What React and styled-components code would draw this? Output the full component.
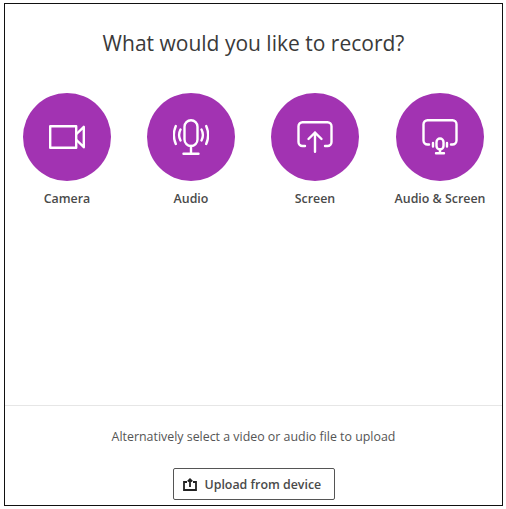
import React from 'react';
import styled, { createGlobalStyle } from 'styled-components';

const GlobalStyle = createGlobalStyle`
  html, body {
    margin: 0;
    padding: 0;
    background: #fff;
    font-family: "Open Sans", "Noto Sans", sans-serif;
  }
`;

const Frame = styled.div`
  box-sizing: border-box;
  width: 499px;
  height: 503px;
  margin: 3px 0 0 4px;
  border: 1px solid #111;
  display: flex;
  flex-direction: column;
  align-items: center;
`;

const Title = styled.h1`
  margin: 25px 0 0;
  font-size: 21px;
  line-height: 28px;
  font-weight: 400;
  color: #3a3a3a;
`;

const Options = styled.div`
  display: grid;
  grid-template-columns: repeat(3, 124px) 126px;
  align-self: stretch;
  margin-top: 36px;
  flex: 1;
  align-content: start;
`;

const Option = styled.button`
  border: 0;
  padding: 0;
  background: none;
  display: flex;
  flex-direction: column;
  align-items: center;
  gap: 8px;
  font-family: inherit;
  cursor: pointer;
`;

const Circle = styled.span`
  width: 88px;
  height: 88px;
  border-radius: 50%;
  background: #a233b2;
  display: flex;
  align-items: center;
  justify-content: center;
`;

const Label = styled.span`
  font-size: 12.4px;
  line-height: 20px;
  font-weight: 600;
  color: #4a4a4a;
  white-space: nowrap;
`;

const Footer = styled.div`
  align-self: stretch;
  border-top: 1px solid #e6e6e6;
  height: 100px;
  box-sizing: border-box;
  display: flex;
  flex-direction: column;
  align-items: center;
`;

const Hint = styled.p`
  margin: 21px 0 0;
  font-size: 12.4px;
  line-height: 20px;
  color: #555;
`;

const UploadButton = styled.button`
  box-sizing: border-box;
  width: 162px;
  height: 32px;
  margin-top: 21px;
  padding: 0 0 0 9px;
  border: 1px solid #555;
  border-radius: 2px;
  background: #fff;
  display: flex;
  align-items: center;
  gap: 8px;
  font-family: inherit;
  font-size: 12.4px;
  font-weight: 600;
  color: #4a4a4a;
`;

const Icon = styled.svg`
  fill: none;
  stroke: #fff;
  stroke-width: 2.4;
  stroke-linecap: round;
  stroke-linejoin: round;
`;

const CameraIcon = () => (
  <Icon width="36" height="24" viewBox="0 0 36 24">
    <rect x="1.2" y="1.2" width="26" height="21.6" />
    <path d="M27.5 9L34.8 1.800V22.200L27.500 15" />
  </Icon>
);

const AudioIcon = () => (
  <Icon width="36" height="36" viewBox="0 0 36 36">
    <rect x="11.5" y="1.2" width="13" height="25.8" rx="6.5" />
    <path d="M18 27v8M10.500 34.800h15" />
    <path d="M7.500 10.500c-1.800 3.500-1.800 7.500 0 11M2.800 7c-2.600 6-2.600 12 0 18M28.500 10.500c1.800 3.500 1.800 7.500 0 11M33.200 7c2.600 6 2.600 12 0 18" />
  </Icon>
);

const ScreenIcon = () => (
  <Icon width="36" height="32" viewBox="0 0 36 32">
    <path d="M8 25H5.500a4 4 0 0 1-4-4V5.200a4 4 0 0 1 4-4h25a4 4 0 0 1 4 4V21a4 4 0 0 1-4 4H28" />
    <path d="M18 30.800V11.500M11.500 18L18 11.500 24.500 18" />
  </Icon>
);

const AudioScreenIcon = () => (
  <Icon width="36" height="36" viewBox="0 0 36 36">
    <path d="M7 25.500H5.500a4 4 0 0 1-4-4V5.200a4 4 0 0 1 4-4h25a4 4 0 0 1 4 4v16.300a4 4 0 0 1-4 4H29" />
    <rect x="14.5" y="19.5" width="7" height="11" rx="3.5" />
    <path d="M18 30.500v3.800M14 34.300h8M11 24v3.500M25 24v3.500" />
  </Icon>
);

const UploadIcon = () => (
  <svg width="14" height="13" viewBox="0 0 14 13" fill="none" stroke="#222" strokeWidth="1.8">
    <path d="M4 4H1v8h12V4H10" />
    <path d="M7 9V1.500M4.800 3.500L7 1.300 9.200 3.500" />
  </svg>
);

const options = [
  { label: 'Camera', icon: <CameraIcon /> },
  { label: 'Audio', icon: <AudioIcon /> },
  { label: 'Screen', icon: <ScreenIcon /> },
  { label: 'Audio & Screen', icon: <AudioScreenIcon /> },
];

const App = () => (
  <>
    <GlobalStyle />
    <Frame>
      <Title>What would you like to record?</Title>
      <Options>
        {options.map((o) => (
          <Option key={o.label}>
            <Circle>{o.icon}</Circle>
            <Label>{o.label}</Label>
          </Option>
        ))}
      </Options>
      <Footer>
        <Hint>Alternatively select a video or audio file to upload</Hint>
        <UploadButton>
          <UploadIcon />
          Upload from device
        </UploadButton>
      </Footer>
    </Frame>
  </>
);

export default App;
